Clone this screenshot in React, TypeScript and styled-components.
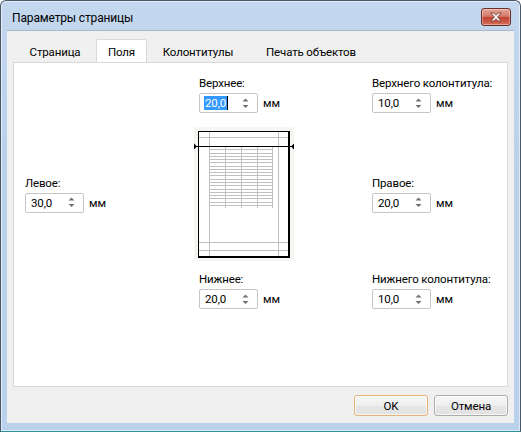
import React from "react"
import styled, { createGlobalStyle } from "styled-components"

const GlobalStyle = createGlobalStyle`
  html, body {
    margin: 0;
    padding: 0;
    background: #ffffff;
  }
  body {
    font-family: "Segoe UI", Roboto, "Noto Sans", sans-serif;
    font-size: 11.5px;
    letter-spacing: -0.15px;
    color: #000;
  }
`

const tabs = [
  { label: "Страница", width: 82 },
  { label: "Поля", width: 51, active: true },
  { label: "Колонтитулы", width: 102 },
  { label: "Печать объектов", width: 124 },
]

interface FieldProps {
  label: string
  value: string
  selected?: boolean
}

const Field: React.FC<FieldProps> = ({ label, value, selected }) => (
  <FieldBox>
    <Label>{label}</Label>
    <SpinRow>
      <Spinner>
        <SpinValue $selected={selected}>{value}</SpinValue>
        <SpinArrows>
          <svg width="7" height="11" viewBox="0 0 7 11">
            <path d="M3.5 0.5 L6.5 3.5 L0.5 3.5 Z" fill="#6f6f6f" />
            <path d="M0.5 7 L6.5 7 L3.5 10 Z" fill="#6f6f6f" />
          </svg>
        </SpinArrows>
      </Spinner>
      <Unit>мм</Unit>
    </SpinRow>
  </FieldBox>
)

// схема страницы с полями
const PagePreview: React.FC = () => {
  const rows = Array.from({ length: 19 }, (_, i) => 146 + i * 3.27)
  return (
    <PreviewWrap>
      <svg width="100" height="134" viewBox="195 127 100 134">
        <rect x="195" y="127" width="100" height="134" fill="#f6f6f3" />
        <rect x="199.5" y="131.5" width="90" height="125" fill="#ffffff" />
        {/* поля */}
        <g stroke="#c0c0c0" strokeWidth="1" shapeRendering="crispEdges">
          <line x1="210.5" y1="131" x2="210.5" y2="257" />
          <line x1="279.5" y1="131" x2="279.5" y2="257" />
          <line x1="199" y1="137.5" x2="290" y2="137.5" />
          <line x1="199" y1="242.5" x2="290" y2="242.5" />
          <line x1="199" y1="250.5" x2="290" y2="250.5" />
          {/* таблица */}
          {rows.map((y, i) => (
            <line key={i} x1="210" y1={Math.round(y) + 0.5} x2="273" y2={Math.round(y) + 0.5} />
          ))}
          <line x1="226.5" y1="146" x2="226.5" y2="208" />
          <line x1="242.5" y1="146" x2="242.5" y2="208" />
          <line x1="258.5" y1="146" x2="258.5" y2="208" />
          <line x1="273.5" y1="146" x2="273.5" y2="208" />
        </g>
        <g shapeRendering="crispEdges">
          <rect x="199" y="131" width="91" height="1" fill="#000" />
          <rect x="199" y="131" width="1" height="127" fill="#000" />
          <rect x="289" y="131" width="2" height="127" fill="#000" />
          <rect x="199" y="256" width="92" height="2" fill="#000" />
          <rect x="197" y="146" width="96" height="1" fill="#000" />
        </g>
        <path d="M195 143.5 L198 146.5 L195 149.5 Z" fill="#000" />
        <path d="M295 143.5 L292 146.5 L295 149.5 Z" fill="#000" />
      </svg>
    </PreviewWrap>
  )
}

export default function App() {
  return (
    <>
      <GlobalStyle />
      <Window>
        <TitleBar>
          <Title>Параметры страницы</Title>
          <CloseButton>
            <svg width="14" height="10" viewBox="0 0 14 10">
              <path
                d="M2 1 L5 1 L7 3.3 L9 1 L12 1 L8.6 5 L12 9 L9 9 L7 6.7 L5 9 L2 9 L5.4 5 Z"
                fill="#ffffff"
                stroke="#6b3a34"
                strokeWidth="0.8"
              />
            </svg>
          </CloseButton>
        </TitleBar>
        <Client>
          <TabStrip>
            {tabs.map(t => (
              <Tab key={t.label} $width={t.width} $active={t.active}>
                {t.label}
              </Tab>
            ))}
          </TabStrip>
          <Panel>
            <Column>
              <Slot />
              <Slot $middle>
                <Field label="Левое:" value="30,0" />
              </Slot>
              <Slot />
            </Column>
            <Column>
              <Field label="Верхнее:" value="20,0" selected />
              <PagePreview />
              <BottomField>
                <Field label="Нижнее:" value="20,0" />
              </BottomField>
            </Column>
            <Column>
              <Field label="Верхнего колонтитула:" value="10,0" />
              <Slot $middle>
                <Field label="Правое:" value="20,0" />
              </Slot>
              <BottomField>
                <Field label="Нижнего колонтитула:" value="10,0" />
              </BottomField>
            </Column>
          </Panel>
          <ButtonRow>
            <Button $isDefault>OK</Button>
            <Button>Отмена</Button>
          </ButtonRow>
        </Client>
      </Window>
    </>
  )
}

const Window = styled.div`
  width: 521px;
  height: 432px;
  box-sizing: border-box;
  border: 1px solid #4a5767;
  border-bottom-color: #2f8f9a;
  border-radius: 6px 6px 0 0;
  background: linear-gradient(180deg, #c3d8ee 0%, #bad1ea 40%, #b9d1ea 100%);
  box-shadow: inset 0 0 0 1px rgba(255, 255, 255, 0.55);
  display: flex;
  flex-direction: column;
  padding: 0 6px 8px 6px;
  overflow: hidden;
`

const TitleBar = styled.div`
  height: 29px;
  display: flex;
  align-items: center;
  justify-content: space-between;
  padding-left: 5px;
  padding-right: 3px;
`

const Title = styled.div`
  font-size: 12px;
  color: #000;
  padding-top: 4px;
`

const CloseButton = styled.div`
  width: 30px;
  height: 18px;
  margin-top: 2px;
  box-sizing: border-box;
  border: 1px solid #6d2e2a;
  border-radius: 3px;
  background: linear-gradient(180deg, #e6a596 0%, #d47a6a 45%, #c0432f 55%, #d1705d 100%);
  box-shadow: inset 0 0 0 1px rgba(255, 255, 255, 0.35);
  display: flex;
  align-items: center;
  justify-content: center;
`

const Client = styled.div`
  flex: 1;
  background: #f0f0f0;
  border-top: 1px solid #a7b8cb;
  display: flex;
  flex-direction: column;
  padding: 9px 6px 0 6px;
`

const TabStrip = styled.div`
  display: flex;
  height: 22px;
  padding-left: 1px;
  position: relative;
  z-index: 1;
`

const Tab = styled.div<{ $width: number; $active?: boolean }>`
  width: ${p => p.$width}px;
  box-sizing: border-box;
  display: flex;
  align-items: center;
  justify-content: center;
  color: #000;
  padding-top: 1px;
  ${p =>
    p.$active
      ? `
    height: 23px;
    margin-top: -1px;
    background: #ffffff;
    border: 1px solid #d9d9d9;
    border-bottom: none;
    border-radius: 2px 2px 0 0;
  `
      : `
    height: 22px;
  `}
`

const Panel = styled.div`
  height: 325px;
  box-sizing: border-box;
  background: #ffffff;
  border: 1px solid #d9d9d9;
  display: grid;
  grid-template-columns: 174px 173px 1fr;
  padding: 13px 0 0 11px;
`

const Column = styled.div`
  display: flex;
  flex-direction: column;
`

const Slot = styled.div<{ $middle?: boolean }>`
  flex: ${p => (p.$middle ? "0 0 134px" : "0 0 37px")};
  display: flex;
  flex-direction: column;
  justify-content: ${p => (p.$middle ? "center" : "flex-start")};
  margin-top: ${p => (p.$middle ? "14px" : "0")};
`

const BottomField = styled.div`
  margin-top: 11px;
`

const FieldBox = styled.div`
  display: flex;
  flex-direction: column;
  align-items: flex-start;
  gap: 2px;
`

const Label = styled.div`
  line-height: 15px;
  color: #000;
  white-space: nowrap;
`

const SpinRow = styled.div`
  display: flex;
  align-items: center;
  gap: 5px;
`

const Spinner = styled.div`
  width: 59px;
  height: 20px;
  box-sizing: border-box;
  border: 1px solid #c6c6c6;
  border-radius: 2px;
  background: #fff;
  display: flex;
  align-items: center;
  padding-left: 4px;
`

const SpinValue = styled.span<{ $selected?: boolean }>`
  line-height: 14px;
  padding: 0 1px;
  ${p =>
    p.$selected
      ? `
    background: #3399ff;
    color: #ffffff;
    border-right: 1px solid #000;
  `
      : `color: #000;`}
`

const SpinArrows = styled.div`
  margin-left: auto;
  margin-right: 8px;
  display: flex;
  align-items: center;
`

const Unit = styled.span`
  color: #000;
`

const PreviewWrap = styled.div`
  margin-top: 14px;
  margin-left: -5px;
  height: 134px;
  display: flex;
`

const ButtonRow = styled.div`
  display: flex;
  justify-content: flex-end;
  gap: 6px;
  padding-top: 8px;
`

const Button = styled.div<{ $isDefault?: boolean }>`
  width: 74px;
  height: 21px;
  box-sizing: border-box;
  border: 1px solid ${p => (p.$isDefault ? "#e5b37a" : "#acacac")};
  border-radius: 3px;
  background: linear-gradient(180deg, #f6f6f6 0%, #efefef 50%, #e6e6e6 51%, #e2e2e2 100%);
  box-shadow: inset 0 0 0 1px rgba(255, 255, 255, 0.7);
  display: flex;
  align-items: center;
  justify-content: center;
  color: #000;
`
